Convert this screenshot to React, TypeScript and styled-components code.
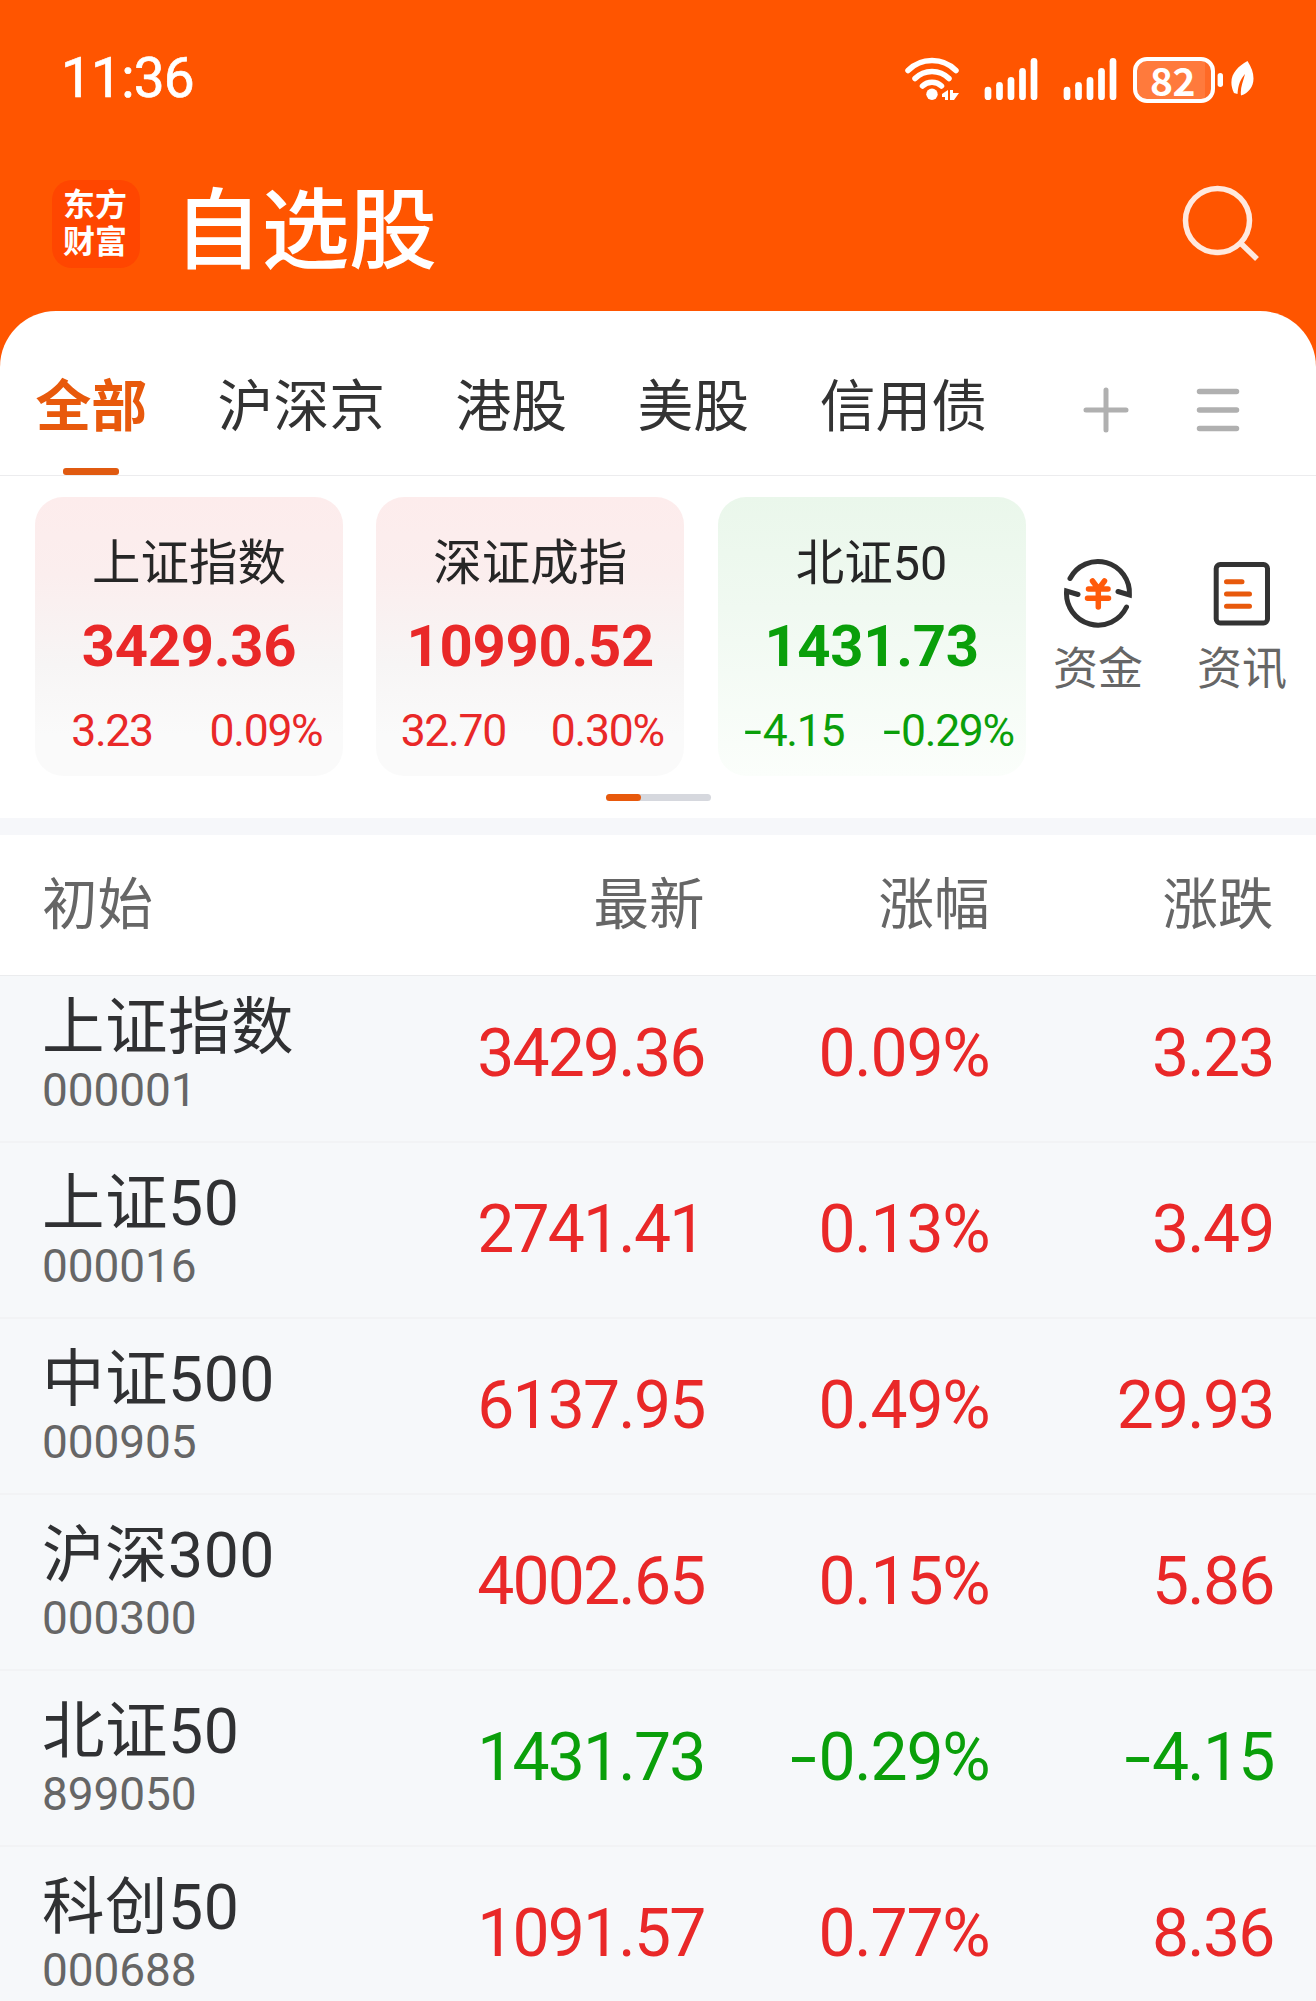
import React from "react";
import styled, { createGlobalStyle } from "styled-components";

const RED = "#e92828";
const GREEN = "#0a9f0a";

const GlobalStyle = createGlobalStyle`
  * { box-sizing: border-box; }
  body {
    margin: 0;
    background: #f6f8fa;
    font-family: Roboto, "Noto Sans CJK SC", sans-serif;
  }
`;

const Screen = styled.div`
  width: 1316px;
  height: 2001px;
  overflow: hidden;
  display: flex;
  flex-direction: column;
  background: #ff5500;
`;

const StatusBar = styled.div`
  height: 156px;
  padding: 0 62px 0 61px;
  display: flex;
  align-items: center;
  justify-content: space-between;
  color: #fff;
`;

const Clock = styled.span`
  font-size: 55px;
  line-height: 60px;
  letter-spacing: -0.8px;
  -webkit-text-stroke: 0.7px #fff;
`;

const Indicators = styled.div`
  display: flex;
  align-items: center;
  padding-top: 4px;
`;

const Battery = styled.div`
  width: 82px;
  height: 46px;
  padding: 0 3px 3px 0;
  border: 4px solid #fff;
  border-radius: 14px;
  background: linear-gradient(90deg, #ff7a3c 68px, #ff6a26 68px);
  display: flex;
  align-items: center;
  justify-content: center;
  font: 700 39px/38px "Noto Sans CJK SC", sans-serif;
  letter-spacing: -0.4px;
`;

const TitleBar = styled.header`
  height: 155px;
  padding: 0 54px 0 52px;
  display: flex;
  align-items: center;
`;

const Logo = styled.div`
  width: 88px;
  height: 88px;
  margin-top: -20px;
  padding: 0 2px 5px 0;
  border-radius: 20px;
  background: #ff4600;
  display: flex;
  align-items: center;
  justify-content: center;
  color: #fff;
  font: 700 32px/37px "Noto Sans CJK SC", sans-serif;
`;

const Title = styled.h1`
  margin: -22px 0 0 34px;
  flex: 1;
  color: #fff;
  font: 500 88px/100px "Noto Sans CJK SC", sans-serif;
  letter-spacing: -0.5px;
`;

const SearchButton = styled.div`
  display: flex;
  margin-top: -18px;
`;

const Sheet = styled.main`
  flex: 1;
  min-height: 0;
  display: flex;
  flex-direction: column;
  border-radius: 56px 56px 0 0;
  background: #fff;
  overflow: hidden;
`;

const Tabs = styled.nav`
  height: 165px;
  flex: none;
  padding-left: 35.5px;
  display: flex;
  border-bottom: 1px solid #ececee;
`;

const Tab = styled.div<{ $active?: boolean }>`
  margin-right: 70.5px;
  display: flex;
  flex-direction: column;
  align-items: center;
  justify-content: space-between;
  padding-top: 51px;
  white-space: nowrap;
  font: ${(p) => (p.$active ? 700 : 400)} 55.8px/80px "Noto Sans CJK SC", sans-serif;
  color: ${(p) => (p.$active ? "#e8590c" : "#333")};
`;

const TabMark = styled.i`
  width: 56px;
  height: 7px;
  border-radius: 3px;
  background: #e05a10;
`;

const TabTools = styled.div`
  display: flex;
  align-items: center;
  gap: 66px;
  padding: 34px 0 0 25.5px;
`;

const Overview = styled.section`
  height: 342px;
  flex: none;
  display: flex;
  flex-direction: column;
  align-items: center;
  padding-top: 21px;
`;

const OverviewRow = styled.div`
  width: 100%;
  display: flex;
  padding-left: 35px;
`;

const Card = styled.article<{ $down?: boolean }>`
  width: 308px;
  height: 279px;
  flex: none;
  margin-right: 33.3px;
  border-radius: 28px;
  background: ${(p) =>
    p.$down
      ? "linear-gradient(#eaf7eb, #f0f9f1 40%, #fbfefb)"
      : "linear-gradient(#fdecec, #fbeeee 28%, #f7f5f5 60%, #fafafa 85%)"};
  display: flex;
  flex-direction: column;
  align-items: center;
  color: ${(p) => (p.$down ? GREEN : RED)};
`;

const CardName = styled.div`
  padding-top: 32px;
  line-height: 70px;
  height: 102px;
  font-size: 48.5px;
  color: #262626;
  white-space: nowrap;
`;

const CardPrice = styled.div`
  margin-top: 11.5px;
  font-size: 58px;
  font-weight: 700;
  line-height: 70px;
  letter-spacing: -0.3px;
`;

const CardChanges = styled.div`
  width: 100%;
  margin-top: 17px;
  display: grid;
  grid-template-columns: 1fr 1fr;
  justify-items: center;
  font-size: 44.5px;
  line-height: 66px;
  letter-spacing: -1.3px;
  white-space: nowrap;
`;

const Sign = styled.span`
  display: inline-block;
  margin: 0 0.05em 0 0.1em;
  transform: scaleX(1.45);
  transform-origin: right;
`;

const Shortcuts = styled.div`
  display: flex;
  padding-top: 60px;
  margin-left: -6px;
  gap: 54px;
`;

const Shortcut = styled.div`
  display: flex;
  flex-direction: column;
  align-items: center;
  gap: 4px;
  font: 400 45px/66px "Noto Sans CJK SC", sans-serif;
  color: #666;
`;

const Pager = styled.div`
  width: 105px;
  height: 7px;
  margin-top: 18px;
  border-radius: 4px;
  background: #d6d8de;
`;

const PagerThumb = styled.div`
  width: 35px;
  height: 7px;
  border-radius: 4px;
  background: #e8590c;
`;

const Divider = styled.div`
  height: 17px;
  flex: none;
  background: #f6f7fa;
`;

const columns = `
  display: grid;
  grid-template-columns: 381px 1fr 285px 284px;
  align-items: center;
  padding: 0 42.5px 0 42px;
`;

const TableHead = styled.div`
  ${columns}
  height: 141px;
  flex: none;
  border-bottom: 1px solid #ebecee;
  font: 400 55.5px/80px "Noto Sans CJK SC", sans-serif;
  color: #666;
`;

const HeadCell = styled.div<{ $end?: boolean }>`
  text-align: ${(p) => (p.$end ? "right" : "left")};
  margin-top: -10px;
`;

const List = styled.div`
  flex: 1;
  min-height: 0;
  overflow: hidden;
  background: #f6f8fa;
`;

const Row = styled.div<{ $down?: boolean }>`
  ${columns}
  height: 176px;
  border-bottom: 2px solid #f2f3f5;
  color: ${(p) => (p.$down ? GREEN : RED)};
  &:first-child {
    margin-top: -9px;
  }
`;

const Name = styled.div`
  font-size: 62.5px;
  line-height: 76px;
  letter-spacing: 0.5px;
  color: #303133;
  white-space: nowrap;
`;

const Code = styled.div`
  margin-top: -3px;
  padding-bottom: 2px;
  font-size: 46px;
  line-height: 54px;
  letter-spacing: -0.1px;
  color: #666;
`;

const Value = styled.div<{ $tight?: boolean }>`
  text-align: right;
  font-size: 66px;
  line-height: 80px;
  letter-spacing: ${(p) => (p.$tight ? "-1.8px" : "-1.2px")};
  white-space: nowrap;
`;

const SignalIcons = () => (
  <svg width="233" height="50" viewBox="0 0 233 50" fill="none" stroke="#fff" strokeLinecap="round">
    <g strokeWidth="5.500">
      <path d="M8 15.500A34 34 0 0 1 56 15.500" />
      <path d="M15 23.500A24 24 0 0 1 49 23.500" />
      <path d="M22.500 31A14 14 0 0 1 41.500 31" />
    </g>
    <circle cx="32" cy="39.300" r="5.700" fill="#fff" stroke="none" />
    <path d="M48 35V45H45V42H42V39ZM50 35H53V38H59L54 45H50Z" fill="#fff" stroke="none" />
    {[88, 167].map((x) => (
      <g key={x} strokeWidth="6.700">
        {[35, 30.3, 25.3, 16.3, 6.3].map((top, i) => (
          <path key={top} d={`M${x + i * 11.5} 41.700V${top}`} />
        ))}
      </g>
    ))}
  </svg>
);

const LeafIcon = () => (
  <svg width="39" height="50" viewBox="0 0 39 50" fill="#fff">
    <rect x="2.600" y="18" width="5.400" height="14" rx="2.700" />
    <path d="M32.500 6C20 13 12 23 19 38L22.500 39C23 30 25.500 24 30 19C28 27 25 33 26 40.500C39 36 43 22 32.500 6Z" />
  </svg>
);

const SearchIcon = () => (
  <svg width="80" height="80" viewBox="0 0 80 80" fill="none" stroke="#ffe9de" strokeWidth="5.500">
    <circle cx="35.500" cy="35.500" r="32" />
    <path d="M58.500 58L75 74" />
  </svg>
);

const PlusIcon = () => (
  <svg width="46" height="46" viewBox="0 0 46 46" stroke="#b0b0b0" strokeWidth="5" strokeLinecap="round">
    <path d="M23 3V43M3 23H43" />
  </svg>
);

const MenuIcon = () => (
  <svg width="46" height="46" viewBox="0 0 46 46" stroke="#b0b0b0" strokeWidth="5.500" strokeLinecap="round">
    <path d="M4.500 4.500H41.500M4.500 23H41.500M4.500 41.500H41.500" />
  </svg>
);

const FundsIcon = () => (
  <svg width="72" height="72" viewBox="0 0 72 72" fill="none" stroke="#333" strokeWidth="5" strokeLinecap="round">
    <path d="M8 21.500A31.500 31.500 0 0 1 67.400 38L56 34.500" />
    <path d="M64.500 50A31.500 31.500 0 0 1 4.600 34L16 37.500" />
    <path d="M30.500 24L36.500 32L42.500 24M26.500 32H46M25.500 41.300H46.500M36.300 32V50" stroke="#ff5a0a" strokeWidth="5.500" />
  </svg>
);

const NewsIcon = () => (
  <svg width="72" height="72" viewBox="0 0 72 72" fill="none" strokeLinecap="round" strokeWidth="5">
    <rect x="10.200" y="7.500" width="51.300" height="58.500" rx="4" stroke="#333" />
    <path d="M20.500 24.700H36M20.500 37H43.500M20.500 49.300H43.500" stroke="#e8590c" />
  </svg>
);

const Amount = ({ value }: { value: string }) =>
  value.startsWith("-") ? (
    <span>
      <Sign>-</Sign>
      {value.slice(1)}
    </span>
  ) : (
    <span>{value}</span>
  );

const indices = [
  { name: "上证指数", price: "3429.36", diff: "3.23", pct: "0.09%" },
  { name: "深证成指", price: "10990.52", diff: "32.70", pct: "0.30%" },
  { name: "北证50", price: "1431.73", diff: "-4.15", pct: "-0.29%", down: true },
];

const stocks = [
  { name: "上证指数", code: "000001", price: "3429.36", pct: "0.09%", diff: "3.23" },
  { name: "上证50", code: "000016", price: "2741.41", pct: "0.13%", diff: "3.49" },
  { name: "中证500", code: "000905", price: "6137.95", pct: "0.49%", diff: "29.93" },
  { name: "沪深300", code: "000300", price: "4002.65", pct: "0.15%", diff: "5.86" },
  { name: "北证50", code: "899050", price: "1431.73", pct: "-0.29%", diff: "-4.15", down: true },
  { name: "科创50", code: "000688", price: "1091.57", pct: "0.77%", diff: "8.36" },
];

export default function App() {
  return (
    <>
      <GlobalStyle />
      <Screen>
        <StatusBar>
          <Clock>11:36</Clock>
          <Indicators>
            <SignalIcons />
            <Battery>82</Battery>
            <LeafIcon />
          </Indicators>
        </StatusBar>
        <TitleBar>
          <Logo>
            <div>
              东方
              <br />
              财富
            </div>
          </Logo>
          <Title>自选股</Title>
          <SearchButton>
            <SearchIcon />
          </SearchButton>
        </TitleBar>
        <Sheet>
          <Tabs>
            {["全部", "沪深京", "港股", "美股", "信用债"].map((label, i) => (
              <Tab key={label} $active={i === 0}>
                {label}
                {i === 0 && <TabMark />}
              </Tab>
            ))}
            <TabTools>
              <PlusIcon />
              <MenuIcon />
            </TabTools>
          </Tabs>
          <Overview>
            <OverviewRow>
              {indices.map((it) => (
                <Card key={it.name} $down={it.down}>
                  <CardName>{it.name}</CardName>
                  <CardPrice>{it.price}</CardPrice>
                  <CardChanges>
                    <Amount value={it.diff} />
                    <Amount value={it.pct} />
                  </CardChanges>
                </Card>
              ))}
              <Shortcuts>
                <Shortcut>
                  <FundsIcon />
                  资金
                </Shortcut>
                <Shortcut>
                  <NewsIcon />
                  资讯
                </Shortcut>
              </Shortcuts>
            </OverviewRow>
            <Pager>
              <PagerThumb />
            </Pager>
          </Overview>
          <Divider />
          <TableHead>
            <HeadCell>初始</HeadCell>
            <HeadCell $end>最新</HeadCell>
            <HeadCell $end>涨幅</HeadCell>
            <HeadCell $end>涨跌</HeadCell>
          </TableHead>
          <List>
            {stocks.map((s) => (
              <Row key={s.code} $down={s.down}>
                <div>
                  <Name>{s.name}</Name>
                  <Code>{s.code}</Code>
                </div>
                <Value $tight>
                  <Amount value={s.price} />
                </Value>
                <Value>
                  <Amount value={s.pct} />
                </Value>
                <Value $tight>
                  <Amount value={s.diff} />
                </Value>
              </Row>
            ))}
          </List>
        </Sheet>
      </Screen>
    </>
  );
}
